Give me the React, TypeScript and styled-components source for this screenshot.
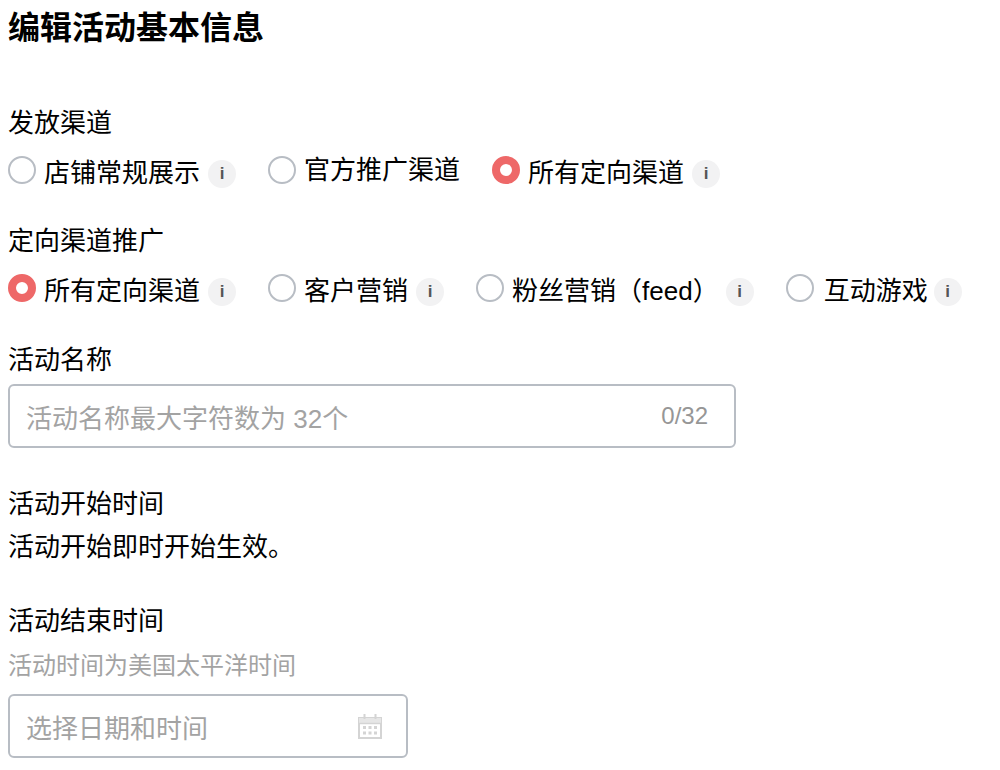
import React from "react";
import styled, { createGlobalStyle } from "styled-components";

const Global = createGlobalStyle`
  html, body { margin: 0; padding: 0; background: #fff; }
  body { font-family: "Liberation Sans", "Noto Sans CJK SC", sans-serif; color: #000; }
`;

const Page = styled.div`
  width: 1000px;
  height: 770px;
  overflow: hidden;
  padding: 8px 0 0 8px;
  box-sizing: border-box;
  display: flex;
  flex-direction: column;
`;

const Title = styled.h1`
  margin: 0 0 59px;
  font-size: 32px;
  line-height: 40px;
  font-weight: 700;
  height: 40px;
`;

const Label = styled.div<{ $after?: number }>`
  font-size: 26px;
  line-height: 32px;
  height: 32px;
  margin-bottom: ${(p) => p.$after ?? 0}px;
`;

const Section = styled.section<{ $after: number }>`
  display: flex;
  flex-direction: column;
  margin-bottom: ${(p) => p.$after}px;
`;

const RadioRow = styled.div`
  display: flex;
  align-items: flex-start;
  height: 34px;
`;

const Option = styled.label<{ $gap: number }>`
  display: flex;
  align-items: flex-start;
  margin-right: ${(p) => p.$gap}px;
`;

const Radio = styled.span<{ $on?: boolean }>`
  width: 28px;
  height: 28px;
  box-sizing: border-box;
  border-radius: 50%;
  flex: none;
  background: #fff;
  border: ${(p) => (p.$on ? "8px solid #ee6868" : "2px solid #b8bdc4")};
`;

const OptionText = styled.span<{ $drop: number; $indent: number }>`
  font-size: 26px;
  line-height: 32px;
  margin-left: ${(p) => p.$indent}px;
  margin-top: ${(p) => p.$drop}px;
  white-space: nowrap;
`;

const InfoDot = styled.span<{ $indent: number }>`
  width: 28px;
  height: 28px;
  border-radius: 50%;
  background: #f2f2f3;
  color: #555;
  flex: none;
  margin-left: ${(p) => p.$indent}px;
  margin-top: 4px;
  display: flex;
  align-items: center;
  justify-content: center;
  font-size: 17px;
  font-weight: 700;
  line-height: 28px;
`;

const InputBox = styled.div<{ $w: number; $h: number; $right: number }>`
  width: ${(p) => p.$w}px;
  height: ${(p) => p.$h}px;
  box-sizing: border-box;
  border: 2px solid #b8bdc4;
  border-radius: 6px;
  padding: 0 ${(p) => p.$right}px 0 16px;
  display: flex;
  align-items: center;
  justify-content: space-between;
  font-size: 26px;
  color: #a3a3a3;
`;

const Counter = styled.span`
  font-size: 24px;
  color: #969696;
`;

const Helper = styled.div`
  font-size: 24px;
  line-height: 32px;
  height: 32px;
  color: #a3a3a3;
  margin-bottom: 12px;
`;

type Opt = { text: string; on?: boolean; info?: boolean; drop: number; indent: number; infoIndent?: number; gap: number };

const OptionItem = ({ o }: { o: Opt }) => (
  <Option $gap={o.gap}>
    <Radio $on={o.on} />
    <OptionText $drop={o.drop} $indent={o.indent}>{o.text}</OptionText>
    {o.info && <InfoDot $indent={o.infoIndent ?? 8}>i</InfoDot>}
  </Option>
);

const first: Opt[] = [
  { text: "店铺常规展示", info: true, drop: 1, indent: 8, gap: 32 },
  { text: "官方推广渠道", drop: -2, indent: 8, gap: 32 },
  { text: "所有定向渠道", on: true, info: true, drop: 1, indent: 8, gap: 0 },
];
const second: Opt[] = [
  { text: "所有定向渠道", on: true, info: true, drop: 1, indent: 8, gap: 32 },
  { text: "客户营销", info: true, drop: 1, indent: 8, gap: 32 },
  { text: "粉丝营销（feed）", info: true, drop: 1, indent: 8, infoIndent: 7, gap: 32 },
  { text: "互动游戏", info: true, drop: 1, indent: 10, infoIndent: 6, gap: 0 },
];

const Calendar = () => (
  <svg width="26" height="26" viewBox="0 0 26 26" fill="none">
    <rect x="2" y="5" width="22" height="20" fill="#fff" stroke="#d4d4d4" strokeWidth="2" />
    <rect x="2" y="5" width="22" height="5" fill="#e6e6e6" />
    <path d="M2 10.5h22" stroke="#d4d4d4" strokeWidth="1.5" />
    <path d="M7.5 1v5M18.5 1v5" stroke="#d4d4d4" strokeWidth="2" />
    <g fill="#d4d4d4">
      <rect x="6" y="13" width="3" height="3" /><rect x="11.5" y="13" width="3" height="3" /><rect x="17" y="13" width="3" height="3" />
      <rect x="6" y="18.5" width="3" height="3" /><rect x="11.5" y="18.5" width="3" height="3" /><rect x="17" y="18.5" width="3" height="3" />
    </g>
  </svg>
);

export default function App() {
  return (
    <Page>
      <Global />
      <Title>编辑活动基本信息</Title>
      <Section $after={35}>
        <Label $after={17}>发放渠道</Label>
        <RadioRow>{first.map((o) => <OptionItem key={o.text} o={o} />)}</RadioRow>
      </Section>
      <Section $after={36}>
        <Label $after={17}>定向渠道推广</Label>
        <RadioRow>{second.map((o) => <OptionItem key={o.text} o={o} />)}</RadioRow>
      </Section>
      <Section $after={40}>
        <Label $after={8}>活动名称</Label>
        <InputBox $w={728} $h={64} $right={26}>
          <span>活动名称最大字符数为 32个</span>
          <Counter>0/32</Counter>
        </InputBox>
      </Section>
      <Section $after={42}>
        <Label $after={11}>活动开始时间</Label>
        <Label>活动开始即时开始生效。</Label>
      </Section>
      <Section $after={0}>
        <Label $after={13}>活动结束时间</Label>
        <Helper>活动时间为美国太平洋时间</Helper>
        <InputBox $w={400} $h={64} $right={23}>
          <span>选择日期和时间</span>
          <Calendar />
        </InputBox>
      </Section>
    </Page>
  );
}
